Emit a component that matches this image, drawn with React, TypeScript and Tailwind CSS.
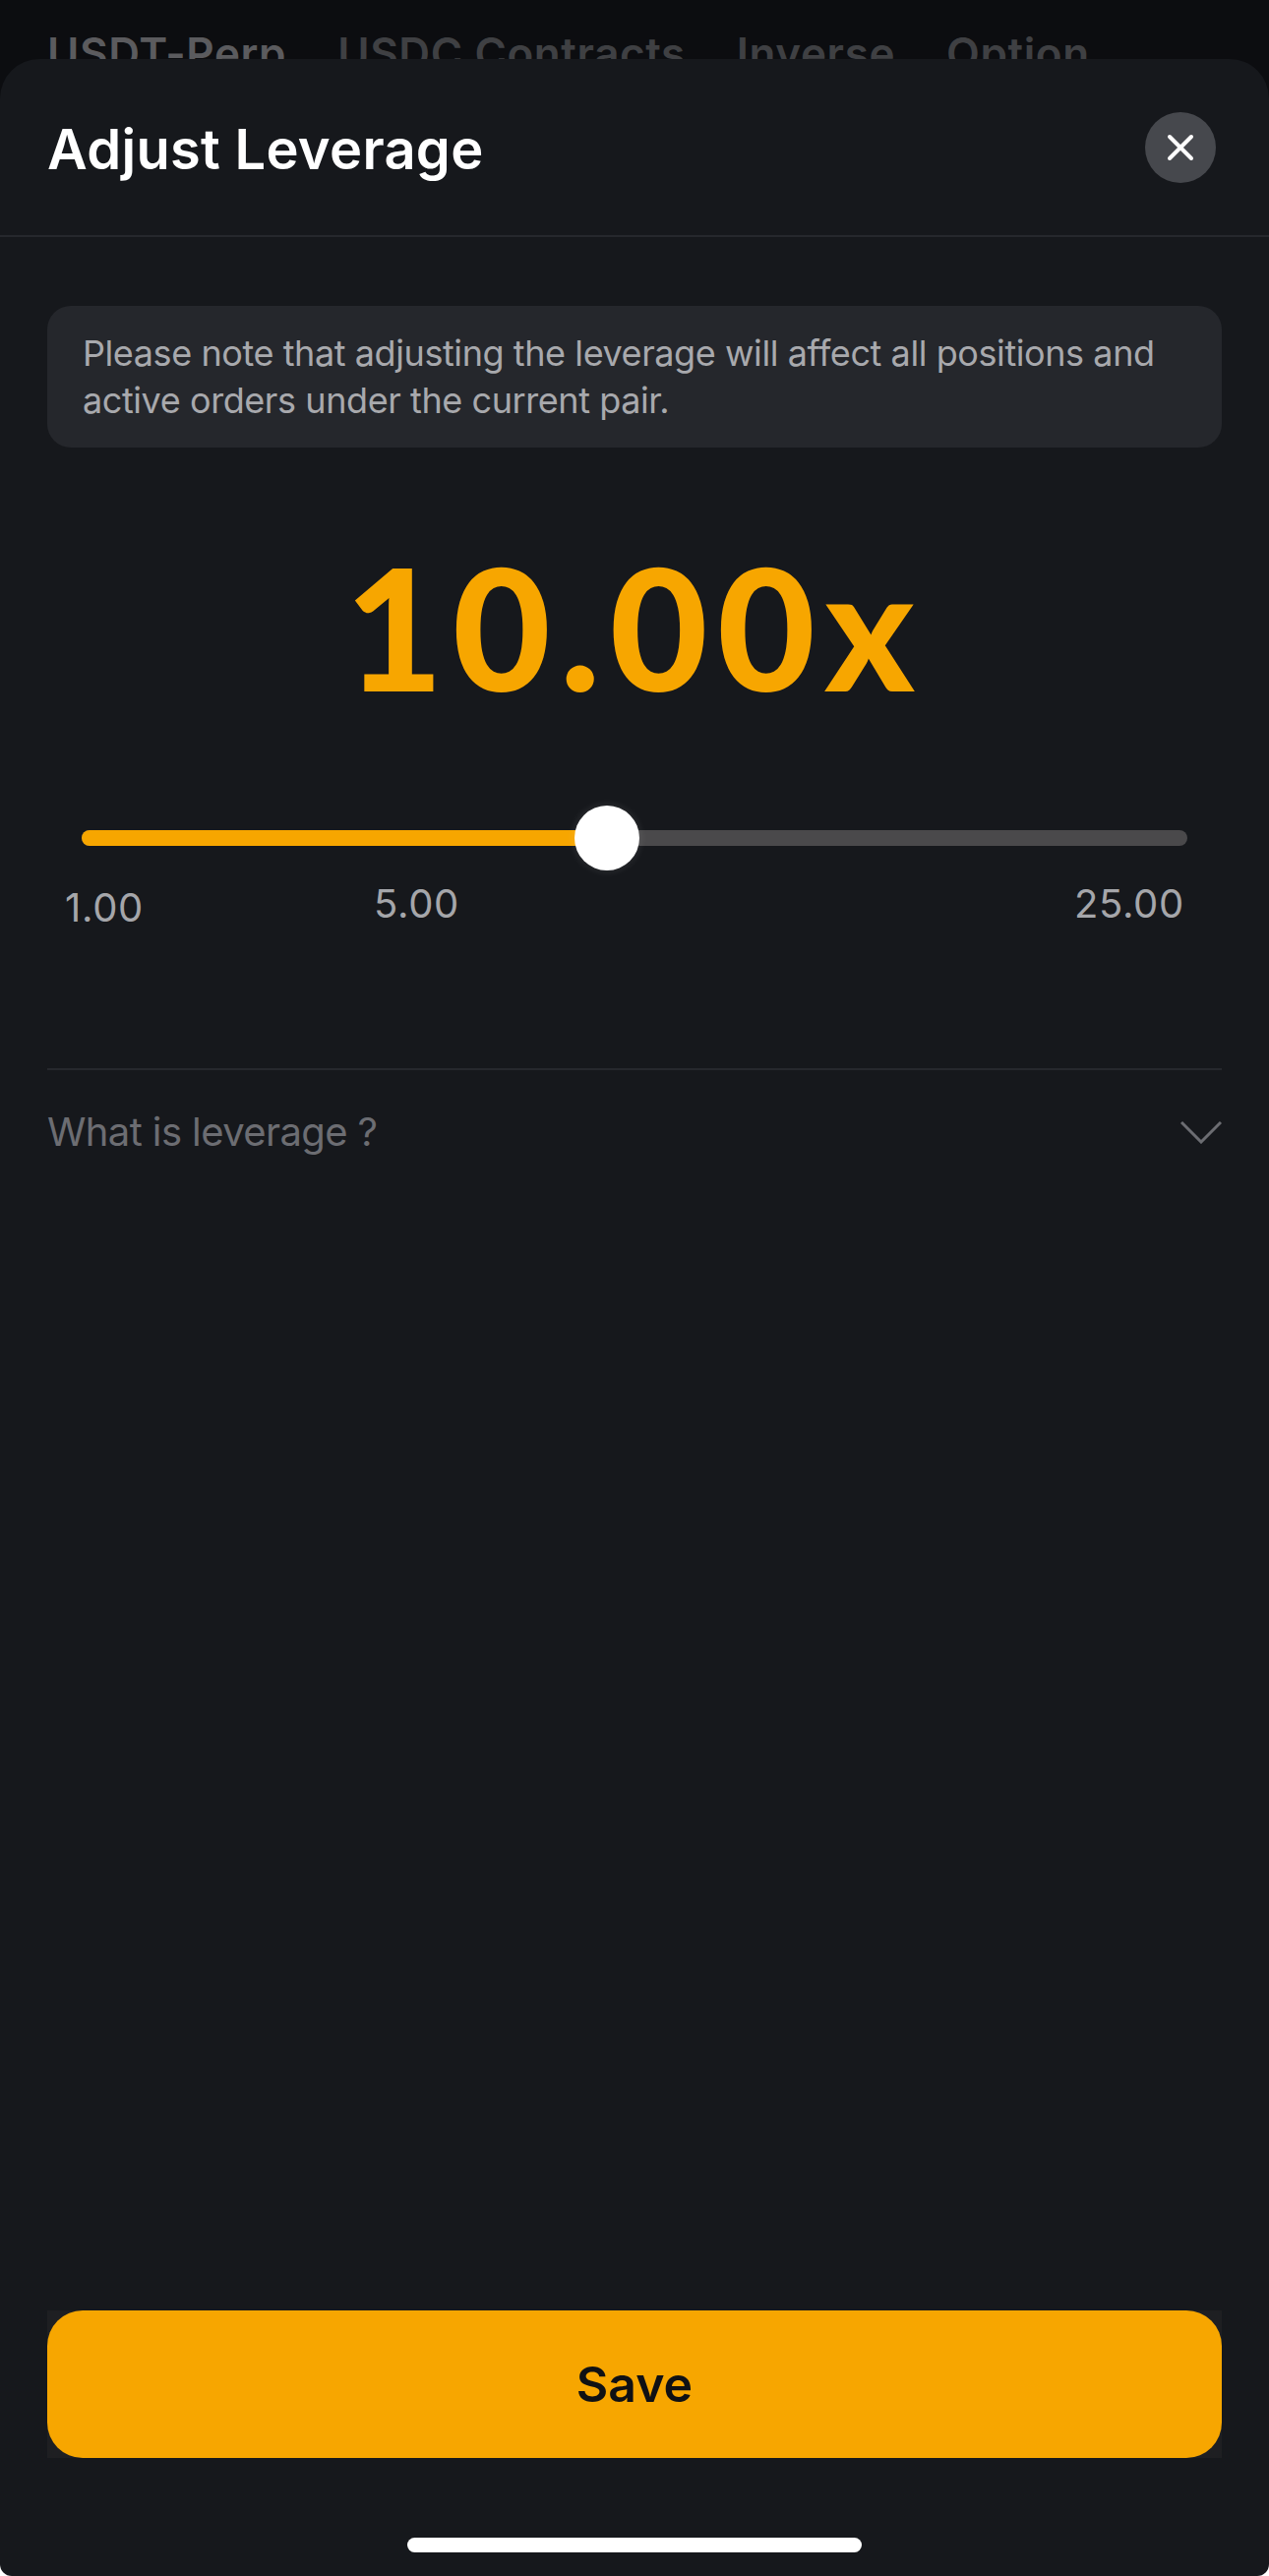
const tabs = [
  { label: "USDT-Perp", className: "text-[#5b5b5e]" },
  { label: "USDC Contracts", className: "text-[#3f4043]" },
  { label: "Inverse", className: "text-[#3f4043]" },
  { label: "Option", className: "text-[#3f4043]" },
];

const sans = "font-['Inter','Liberation_Sans',sans-serif]";

export default function App() {
  return (
    <div className={`flex h-[2619px] w-[1290px] flex-col overflow-hidden bg-[linear-gradient(#0c0d10_2500px,#ffffff_2500px)] ${sans}`}>
      {/* tabs behind the sheet */}
      <div className="flex h-[60px] shrink-0 gap-[52px] overflow-hidden pl-[48px] pt-[26px] text-[44px] font-semibold leading-[56px] tracking-[0.6px]">
        {tabs.map((tab) => (
          <span key={tab.label} className={`whitespace-nowrap ${tab.className}`}>
            {tab.label}
          </span>
        ))}
      </div>

      {/* sheet */}
      <div className="flex flex-1 flex-col rounded-t-[40px] rounded-b-[12px] bg-[#16181c]">
        <div className="flex h-[181px] shrink-0 items-center justify-between border-b-2 border-[#26282d] pl-[48px] pr-[54px]">
          <h1 className="mt-[4px] text-[56px] font-semibold leading-[72px] tracking-[0.3px] text-white">Adjust Leverage</h1>
          <button className="flex h-[72px] w-[72px] items-center justify-center rounded-full bg-[#46484d]">
            <svg width="28" height="28" viewBox="0 0 28 28" fill="none" stroke="white" strokeWidth="4" strokeLinecap="round">
              <path d="M3 3L25 25M25 3L3 25" />
            </svg>
          </button>
        </div>

        <div className="flex flex-1 flex-col px-[48px] pt-[70px]">
          <div className="h-[144px] rounded-[24px] bg-[#25272c] px-[36px] py-[24px] text-[36px] leading-[48px] tracking-[-0.42px] text-[#a8a9ad]">
            Please note that adjusting the leverage will affect all positions and active orders under the current pair.
          </div>

          <div className="mt-[102px] text-center font-['Lato',sans-serif] text-[172px] font-black leading-[160px] tracking-[9.5px] text-[#f7a600]">
            10.00x
          </div>

          {/* slider */}
          <div className="relative mx-[35px] mt-[127px] h-[16px] rounded-full bg-[#4a494b]">
            <div className="h-full w-[534px] rounded-full bg-[#f7a600]" />
            <div className="absolute left-[501px] top-[-25px] h-[66px] w-[66px] rounded-full bg-white shadow-[0_0_10px_rgba(255,255,255,0.12)]" />
          </div>
          <div className="relative mt-[35px] flex h-[48px] text-[40px] leading-[48px] tracking-[0.7px] text-[#a5a6aa]">
            <span className="ml-[18px] mt-[4px] w-[314px]">1.00</span>
            <span>5.00</span>
            <span className="ml-auto mr-[38px]">25.00</span>
          </div>

          <div className="mt-[143px] flex h-[130px] items-start justify-between border-t-2 border-[#26282d] pt-[31px]">
            <span className="text-[40px] leading-[64px] tracking-[-0.6px] text-[#6c6d72]">What is leverage ?</span>
            <svg className="mt-[20px]" width="42" height="24" viewBox="0 0 42 24" fill="none" stroke="#6c6d72" strokeWidth="3">
              <path d="M1 2L21 22L41 2" />
            </svg>
          </div>

          <div className="mt-auto shrink-0 bg-[#1e1f22]">
            <button className="block h-[150px] w-full rounded-[36px] bg-[#f7a600] text-[50px] font-semibold text-[#101114]">
              Save
            </button>
          </div>

          {/* home indicator */}
          <div className="mx-auto mb-[24px] mt-[81px] h-[15px] w-[462px] shrink-0 rounded-full bg-white" />
        </div>
      </div>
    </div>
  );
}
